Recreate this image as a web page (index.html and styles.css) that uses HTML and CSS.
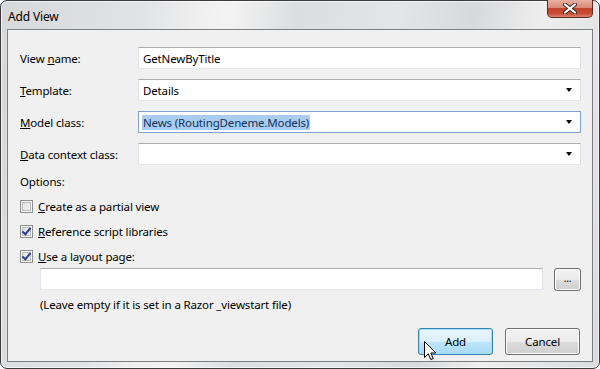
FILE: index.html
```html
<!DOCTYPE html>
<html lang="en">
<head>
    <meta charset="UTF-8">
    <title>Add View</title>
    <link rel="stylesheet" href="styles.css">
</head>
<body>
    <div class="window">
        <div class="titlebar">
            <span class="title">Add View</span>
            <div class="close">
                <svg width="14" height="11" viewBox="0 0 14 11">
                    <path d="M2 1.5 L12 9.5 M12 1.5 L2 9.5" stroke="#3b2a26" stroke-width="4" stroke-linecap="round"/>
                    <path d="M2 1.5 L12 9.5 M12 1.5 L2 9.5" stroke="#ffffff" stroke-width="2.2" stroke-linecap="round"/>
                </svg>
            </div>
        </div>

        <div class="client">
            <!-- main fields -->
            <div class="fields">
                <label>View <u>n</u>ame:</label>
                <div class="textbox">GetNewByTitle</div>

                <label><u>T</u>emplate:</label>
                <div class="textbox combo">Details<span class="arrow"></span></div>

                <label><u>M</u>odel class:</label>
                <div class="textbox combo focused"><span class="selected">News (RoutingDeneme.Models)</span><span class="arrow"></span></div>

                <label><u>D</u>ata context class:</label>
                <div class="textbox combo"><span class="arrow"></span></div>
            </div>

            <div class="options">
                <div class="options-title">Options:</div>
                <div class="check-row"><span class="checkbox"></span><span><u>C</u>reate as a partial view</span></div>
                <div class="check-row"><span class="checkbox checked"></span><span><u>R</u>eference script libraries</span></div>
                <div class="check-row"><span class="checkbox checked"></span><span><u>U</u>se a layout page:</span></div>
                <div class="layout-row">
                    <div class="textbox layout-box"></div>
                    <div class="btn browse">...</div>
                </div>
                <div class="hint">(Leave empty if it is set in a Razor _viewstart file)</div>
            </div>

            <div class="buttons">
                <div class="btn default">Add
                    <svg class="cursor" width="13" height="20" viewBox="0 0 13 20">
                        <path d="M0.5 0.5 L0.5 16.5 L4.3 12.8 L6.8 18.6 L9.2 17.6 L6.8 12 L11.8 12 Z" fill="#ffffff" stroke="#000000" stroke-width="1" stroke-linejoin="round"/>
                    </svg>
                </div>
                <div class="btn">Cancel</div>
            </div>
        </div>
    </div>
</body>
</html>
```

FILE: styles.css
```css
body {
    margin: 0;
    background: #ffffff;
    font-family: "Noto Sans", "Open Sans", Arial, sans-serif;
    font-size: 11.5px;
    letter-spacing: -0.15px;
    color: #000000;
}
.window {
    width: 600px;
    height: 369px;
    box-sizing: border-box;
    border: 1px solid #3c3c3c;
    border-radius: 7px;
    padding: 0 6px 6px 6px;
    display: flex;
    flex-direction: column;
    background: linear-gradient(100deg, #d6d8da 0%, #e2e3e5 22%, #efefef 30%, #f3f3f3 35%, #dcdddf 45%, #e4e5e6 60%, #d8d9db 72%, #eeeeee 82%, #dadbdd 100%);
    box-shadow: inset 0 0 0 1px rgba(255, 255, 255, 0.6);
}
.titlebar {
    height: 28px;
    display: flex;
    justify-content: space-between;
    align-items: flex-start;
}
.title {
    margin-top: 7px;
    margin-left: 1px;
    font-size: 12px;
    color: #000000;
}
.close {
    margin-top: -1px;
    width: 46px;
    height: 18px;
    box-sizing: border-box;
    border: 1px solid #5b2b23;
    border-top: none;
    border-radius: 0 0 5px 5px;
    background: linear-gradient(#eab0a2 0%, #d98a77 45%, #c1442c 50%, #c84d36 80%, #e08570 100%);
    display: flex;
    align-items: center;
    justify-content: center;
}
.client {
    flex: 1;
    border: 1px solid #7c7f84;
    background: #f0f0f0;
    padding: 17px 11px 6px 12px;
    display: flex;
    flex-direction: column;
}
.fields {
    display: grid;
    grid-template-columns: 118px 1fr;
    grid-auto-rows: 22px;
    row-gap: 10px;
    align-items: center;
}
.fields label {
    white-space: nowrap;
}
.textbox {
    height: 22px;
    box-sizing: border-box;
    background: #ffffff;
    border: 1px solid;
    border-color: #abadb3 #dbdfe6 #e3e9ef #e2e3ea;
    padding: 0 4px;
    display: flex;
    align-items: center;
    position: relative;
}
.combo .arrow {
    margin-left: auto;
    margin-right: 4px;
    width: 0;
    height: 0;
    border-left: 3.5px solid transparent;
    border-right: 3.5px solid transparent;
    border-top: 4px solid #000000;
}
.focused {
    border-color: #7da2ce;
}
.selected {
    background: #a9cdf1;
    color: #11325c;
    padding: 0 1px;
    margin-left: -1px;
}
.options {
    margin-top: 9px;
    display: flex;
    flex-direction: column;
}
.options-title {
    height: 16px;
    line-height: 16px;
    margin-bottom: 8px;
}
.check-row {
    height: 16px;
    display: flex;
    align-items: center;
    gap: 5px;
    margin-bottom: 9px;
}
.check-row:nth-child(4) {
    margin-bottom: 4px;
}
.checkbox {
    width: 13px;
    height: 13px;
    box-sizing: border-box;
    border: 1px solid #8e8f8f;
    background: linear-gradient(135deg, #dcdcdc, #f7f7f7);
    box-shadow: inset 0 0 0 1px #f4f4f4, inset 0 0 0 2px #bcbcbc;
    position: relative;
}
.checkbox.checked::after {
    content: "";
    position: absolute;
    left: 3px;
    top: 0px;
    width: 3px;
    height: 7px;
    border: solid #2f3e8e;
    border-width: 0 2px 2px 0;
    transform: rotate(40deg);
}
.layout-row {
    display: flex;
    align-items: flex-start;
    gap: 11px;
    margin-left: 20px;
}
.layout-box {
    flex: 1;
}
.hint {
    margin-left: 20px;
    margin-top: 6px;
    line-height: 16px;
}
.btn {
    box-sizing: border-box;
    border: 1px solid #707070;
    border-radius: 3px;
    background: linear-gradient(#f2f2f2 0%, #ebebeb 50%, #dddddd 51%, #cfcfcf 100%);
    box-shadow: inset 0 0 0 1px #fcfcfc;
    display: flex;
    align-items: center;
    justify-content: center;
    position: relative;
}
.browse {
    width: 27px;
    height: 23px;
    font-size: 10px;
    padding-bottom: 3px;
}
.buttons {
    margin-top: auto;
    display: flex;
    justify-content: flex-end;
    gap: 12px;
    margin-right: 1px;
}
.buttons .btn {
    width: 75px;
    height: 27px;
}
.btn.default {
    border-color: #3c7fb1;
    background: linear-gradient(#eaf6fd 0%, #d9f0fc 50%, #bee6fd 51%, #a7d9f5 100%);
    box-shadow: inset 0 0 0 1px #9ce3f7;
}
.cursor {
    position: absolute;
    left: 5px;
    top: 12px;
}
```
